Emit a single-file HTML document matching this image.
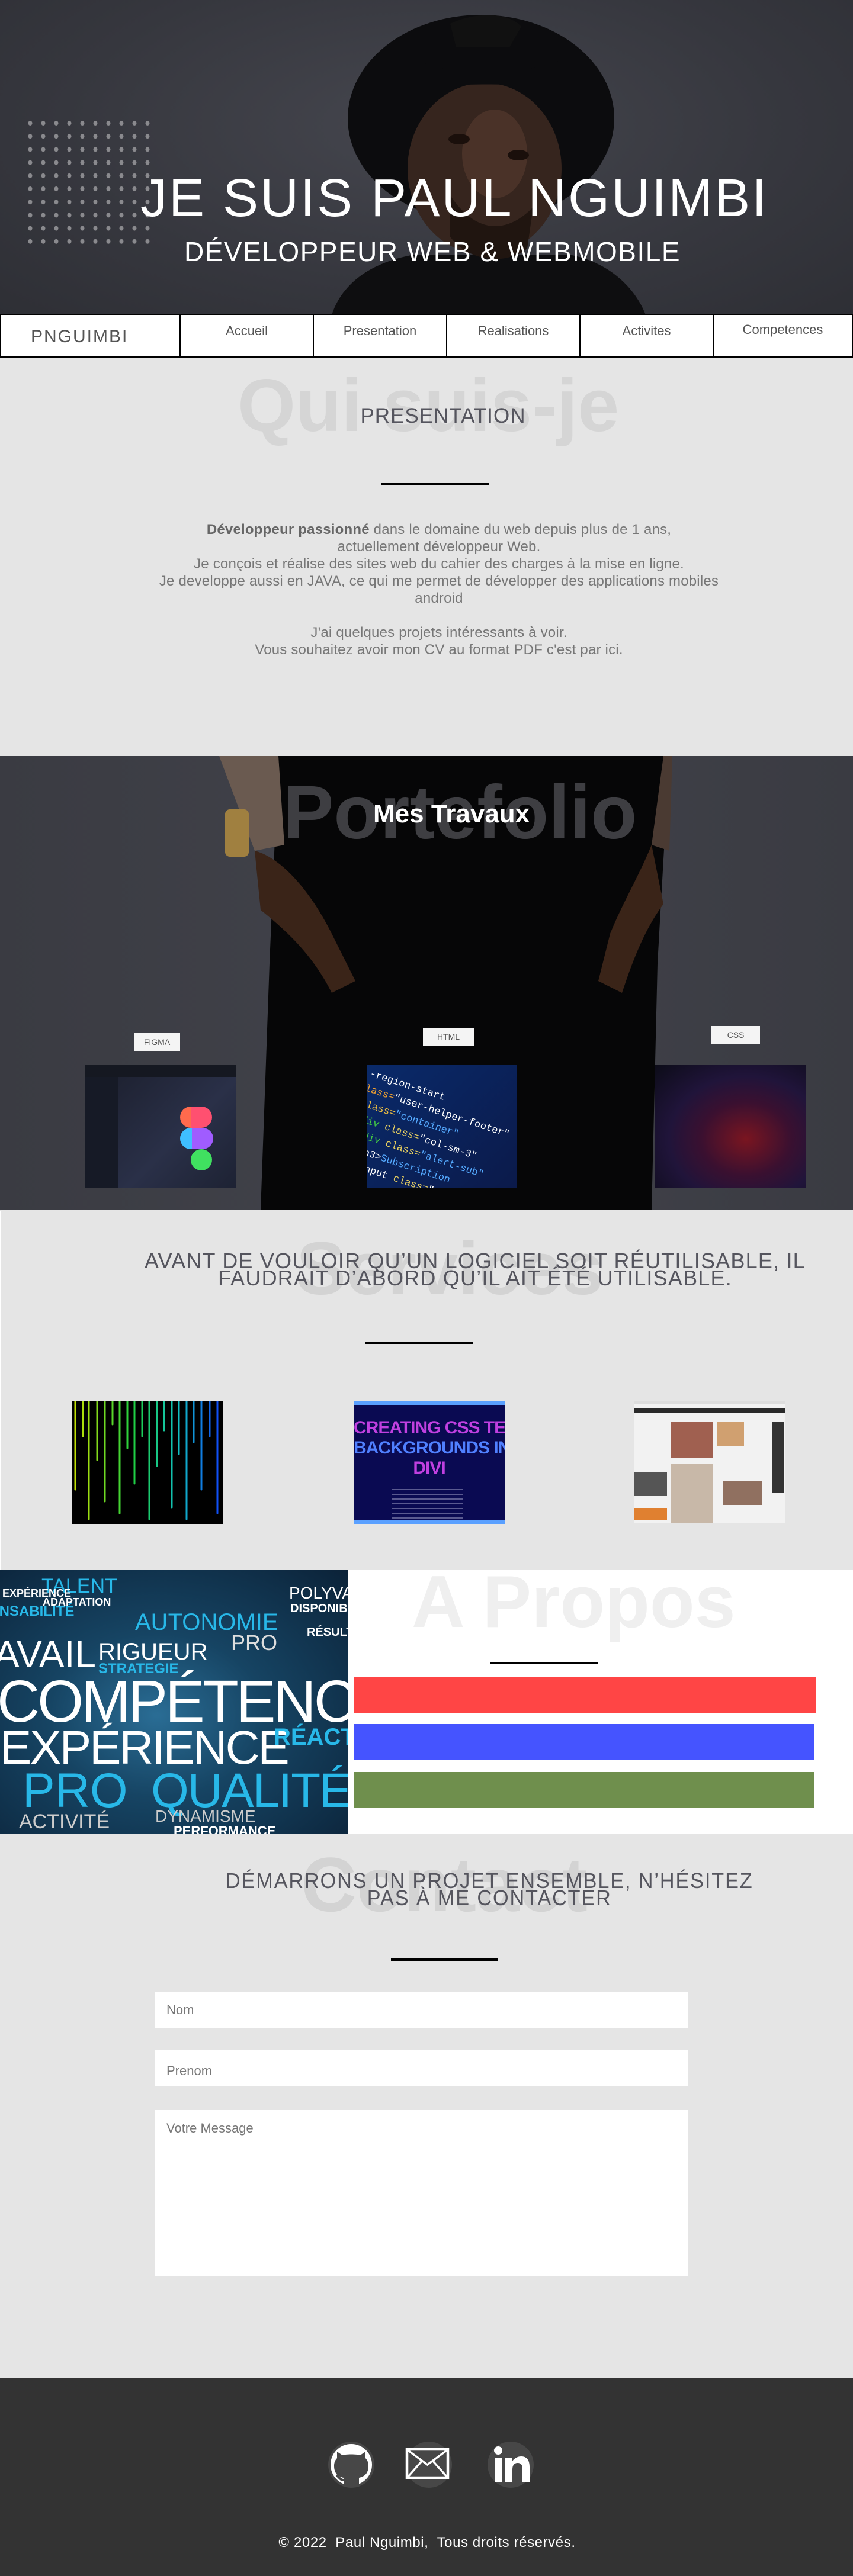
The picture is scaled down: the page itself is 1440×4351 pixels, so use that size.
<!DOCTYPE html>
<html><head><meta charset="utf-8">
<style>
*{margin:0;padding:0;box-sizing:border-box}
body{width:1440px;height:4351px;position:relative;overflow:hidden;background:#e5e5e5;font-family:"Liberation Sans",sans-serif}
.a{position:absolute}
.c{text-align:center;white-space:nowrap}
.wm{position:absolute;font-weight:bold;white-space:nowrap;line-height:1}
.line{position:absolute;height:4px;background:#000}
</style></head><body>

<!-- HERO -->
<div class="a" style="left:0;top:0;width:1440px;height:532px;background:radial-gradient(ellipse at 50% 40%,#45464e 0%,#36373e 60%,#2e2f35 100%);overflow:hidden">
  <svg class="a" style="left:0;top:0" width="1440" height="532">
    <path d="M560 532 C580 470 640 440 700 430 L960 430 C1020 440 1070 480 1090 532 Z" fill="#0e0e10"/>
    <ellipse cx="812" cy="200" rx="225" ry="175" fill="#0c0c0e"/>
    <path d="M760 40 C800 20 860 20 880 45 L860 80 L770 80 Z" fill="#111"/>
    <ellipse cx="818" cy="285" rx="130" ry="145" fill="#36251e"/>
    <ellipse cx="835" cy="260" rx="55" ry="75" fill="#4a3228"/>
    <ellipse cx="775" cy="235" rx="18" ry="9" fill="#1a0f0b"/>
    <ellipse cx="875" cy="262" rx="18" ry="9" fill="#1a0f0b"/>
    <path d="M760 330 C800 390 850 400 900 350 L890 420 C850 450 790 440 760 400 Z" fill="#201510"/>
    <path d="M700 100 C760 130 880 130 950 100 L950 150 C880 140 760 140 700 150 Z" fill="#0c0c0e"/>
  </svg>
  <svg class="a" style="left:46px;top:203px" width="215" height="215">
    <defs><pattern id="dp" width="22" height="22.2" patternUnits="userSpaceOnUse"><ellipse cx="5" cy="5" rx="3.5" ry="4" fill="#8a8a8e"/></pattern></defs>
    <rect width="215" height="215" fill="url(#dp)"/>
  </svg>
  <div class="a c" style="left:237px;top:284px;font-size:90px;color:#fff;letter-spacing:3px">JE SUIS PAUL NGUIMBI</div>
  <div class="a c" style="left:311px;top:398px;font-size:46px;color:#fff;letter-spacing:1.5px">DÉVELOPPEUR WEB &amp; WEBMOBILE</div>
</div>

<!-- NAV -->
<div class="a" style="left:0;top:530px;width:1440px;height:74px;background:#fff;border:2px solid #000">
  <div class="a" style="left:0;top:0;width:303px;height:70px;border-right:2px solid #000;font-size:30px;color:#555;letter-spacing:2px;padding:20px 0 0 50px">PNGUIMBI</div>
  <div class="a c" style="left:303px;top:0;width:225px;height:70px;border-right:2px solid #000;font-size:22px;color:#555;padding-top:14px">Accueil</div>
  <div class="a c" style="left:528px;top:0;width:225px;height:70px;border-right:2px solid #000;font-size:22px;color:#555;padding-top:14px">Presentation</div>
  <div class="a c" style="left:753px;top:0;width:225px;height:70px;border-right:2px solid #000;font-size:22px;color:#555;padding-top:14px">Realisations</div>
  <div class="a c" style="left:978px;top:0;width:225px;height:70px;border-right:2px solid #000;font-size:22px;color:#555;padding-top:14px">Activites</div>
  <div class="a c" style="left:1203px;top:0;width:233px;height:70px;font-size:22px;color:#555;padding-top:12px">Competences</div>
</div>

<!-- PRESENTATION -->
<div class="wm" style="left:401px;top:622px;font-size:126px;color:#d5d5d5">Qui suis-je</div>
<div class="a c" style="left:0;width:1496px;top:683px;font-size:35px;color:#55555e;letter-spacing:1px">PRESENTATION</div>
<div class="line" style="left:644px;top:815px;width:181px"></div>
<div class="a c" style="left:0;width:1482px;top:880px;font-size:24px;line-height:29px;color:#777;letter-spacing:0.2px">
<b style="color:#666">Développeur passionné</b> dans le domaine du web depuis plus de 1 ans,<br>actuellement développeur Web.<br>Je conçois et réalise des sites web du cahier des charges à la mise en ligne.<br>Je developpe aussi en JAVA, ce qui me permet de développer des applications mobiles<br>android<br><br>J'ai quelques projets intéressants à voir.<br>Vous souhaitez avoir mon CV au format PDF c'est par ici.
</div>

<!-- PORTFOLIO -->
<div class="a" style="left:0;top:1277px;width:1440px;height:767px;background:linear-gradient(90deg,#3a3b42,#42434b 50%,#3a3b42);overflow:hidden">
  <svg class="a" style="left:0;top:0" width="1440" height="767">
    <path d="M470 0 L1130 0 L1110 350 L1100 767 L440 767 L455 350 Z" fill="#060607"/>
    <path d="M370 0 L470 0 L480 150 L430 160 Z" fill="#6a5a50"/>
    <path d="M1120 0 L1135 0 L1130 160 L1100 150 Z" fill="#4a3a32"/>
    <rect x="380" y="90" width="40" height="80" rx="8" fill="#a08040"/>
    <path d="M430 160 C470 170 520 220 560 300 L600 380 L560 400 C530 340 490 300 440 260 Z" fill="#3a2418"/>
    <path d="M1100 150 C1080 200 1050 250 1030 300 L1010 380 L1050 400 C1070 340 1090 290 1120 250 Z" fill="#3a2418"/>
  </svg>
  <div class="wm" style="left:478px;top:32px;font-size:128px;color:rgba(110,110,115,.55)">Portefolio</div>
  <div class="a c" style="left:630px;top:73px;font-size:44px;font-weight:bold;color:#fff">Mes Travaux</div>
  <div class="a c" style="left:226px;top:468px;width:78px;height:31px;background:#f4f4f4;font-size:14px;color:#555;line-height:31px">FIGMA</div>
  <div class="a c" style="left:714px;top:459px;width:86px;height:31px;background:#f4f4f4;font-size:14px;color:#555;line-height:31px">HTML</div>
  <div class="a c" style="left:1201px;top:456px;width:82px;height:31px;background:#f4f4f4;font-size:14px;color:#555;line-height:31px">CSS</div>
  <div class="a" style="left:144px;top:522px;width:254px;height:208px;background:linear-gradient(135deg,#1a1d2a,#2a3048 60%,#1d2233);overflow:hidden">
    <div class="a" style="left:0;top:0;width:254px;height:20px;background:#151821"></div>
    <div class="a" style="left:0;top:20px;width:55px;height:188px;background:#161a26"></div>
    <div class="a" style="left:160px;top:70px;width:36px;height:36px;border-radius:18px 0 0 18px;background:#ff6a4d"></div>
    <div class="a" style="left:178px;top:70px;width:36px;height:36px;border-radius:0 18px 18px 0;background:#ff5070"></div>
    <div class="a" style="left:160px;top:106px;width:36px;height:36px;border-radius:18px;background:#3fbfff"></div>
    <div class="a" style="left:180px;top:106px;width:36px;height:36px;border-radius:0 18px 18px 0;background:#a05cff"></div>
    <div class="a" style="left:178px;top:142px;width:36px;height:36px;border-radius:18px;background:#40e060"></div>
  </div>
  <div class="a" style="left:619px;top:522px;width:254px;height:208px;background:linear-gradient(135deg,#0a2a6a,#0b1a4a);overflow:hidden;font-family:'Liberation Mono',monospace;font-size:17px;line-height:26px;color:#e8d060">
    <div style="transform:rotate(18deg);transform-origin:0 0;padding-left:10px;white-space:nowrap">
    <span style="color:#fff">-region-start</span><br><span style="color:#f0a030">lass=</span><span style="color:#fff">"user-helper-footer"</span><br><span style="color:#f0c040">class=</span><span style="color:#5af">"container"</span><br><span style="color:#4c4">&lt;div</span> class=<span style="color:#fff">"col-sm-3"</span><br>&nbsp;<span style="color:#4c4">&lt;div</span> class=<span style="color:#5af">"alert-sub"</span><br>&nbsp;&nbsp;<span style="color:#fff">&lt;h3&gt;</span><span style="color:#5af">Subscription</span><br>&nbsp;&nbsp;<span style="color:#fff">&lt;input</span> class=<span style="color:#fff">"alert"</span></div>
  </div>
  <div class="a" style="left:1106px;top:522px;width:255px;height:208px;background:radial-gradient(ellipse at 60% 60%,#7a1520 0%,#3a1030 35%,#20143a 60%,#0c0c18 100%)"></div>
</div>

<!-- SERVICES -->
<div class="a" style="left:0;top:2045px;width:1440px;height:607px;background:#e5e5e5;border-left:2px solid #fff"></div>
<div class="wm" style="left:500px;top:2080px;font-size:126px;color:#d3d3d3">Services</div>
<div class="a c" style="left:244px;top:2115px;font-size:36px;line-height:29px;color:#55555e;letter-spacing:1.2px">AVANT DE VOULOIR QU’UN LOGICIEL SOIT RÉUTILISABLE, IL<br>FAUDRAIT D’ABORD QU’IL AIT ÉTÉ UTILISABLE.</div>
<div class="line" style="left:617px;top:2266px;width:181px"></div>
<div class="a" style="left:122px;top:2366px;width:255px;height:208px;background:#000;overflow:hidden">
  <svg width="255" height="208">
    <defs><linearGradient id="ng" gradientUnits="userSpaceOnUse" x1="0" y1="0" x2="255" y2="0"><stop offset="0" stop-color="#c8e000"/><stop offset=".4" stop-color="#20d040"/><stop offset=".7" stop-color="#10c0c0"/><stop offset="1" stop-color="#1040ff"/></linearGradient></defs>
    <g stroke="url(#ng)" stroke-width="3" stroke-linecap="round">
      <line x1="5" y1="0" x2="5" y2="150"/><line x1="18" y1="0" x2="18" y2="60"/><line x1="28" y1="0" x2="28" y2="200"/><line x1="42" y1="0" x2="42" y2="100"/><line x1="55" y1="0" x2="55" y2="170"/><line x1="68" y1="0" x2="68" y2="40"/><line x1="80" y1="0" x2="80" y2="190"/><line x1="93" y1="0" x2="93" y2="80"/><line x1="105" y1="0" x2="105" y2="140"/><line x1="118" y1="0" x2="118" y2="60"/><line x1="130" y1="0" x2="130" y2="200"/><line x1="143" y1="0" x2="143" y2="110"/><line x1="155" y1="0" x2="155" y2="50"/><line x1="168" y1="0" x2="168" y2="180"/><line x1="180" y1="0" x2="180" y2="90"/><line x1="193" y1="0" x2="193" y2="200"/><line x1="205" y1="0" x2="205" y2="70"/><line x1="218" y1="0" x2="218" y2="150"/><line x1="232" y1="0" x2="232" y2="60"/><line x1="245" y1="0" x2="245" y2="190"/>
    </g>
  </svg>
</div>
<div class="a" style="left:597px;top:2366px;width:255px;height:208px;background:#0a0a52;border-top:7px solid #5aa0ff;border-bottom:7px solid #5aa0ff;overflow:hidden">
  <div class="c" style="margin-top:22px;font-size:30px;font-weight:bold;line-height:34px;color:#c040e0;letter-spacing:-1px">CREATING CSS TEXT<br><span style="color:#5080ff">BACKGROUNDS IN</span><br>DIVI</div>
  <div style="margin:18px 0 0 65px;width:120px;height:50px;background:repeating-linear-gradient(#5a5a90 0 2px,transparent 2px 8px)"></div>
</div>
<div class="a" style="left:1071px;top:2366px;width:255px;height:206px;background:#f2f2f2;border-top:6px solid #ddd;overflow:hidden">
  <div style="height:9px;background:#2a2a2a;margin-top:6px"></div>
  <div class="a" style="left:62px;top:30px;width:70px;height:60px;background:#a06050"></div>
  <div class="a" style="left:140px;top:30px;width:45px;height:40px;background:#d0a070"></div>
  <div class="a" style="left:232px;top:30px;width:20px;height:120px;background:#333"></div>
  <div class="a" style="left:0;top:115px;width:55px;height:40px;background:#555"></div>
  <div class="a" style="left:62px;top:100px;width:70px;height:120px;background:#c8b8a8"></div>
  <div class="a" style="left:150px;top:130px;width:65px;height:40px;background:#907060"></div>
  <div class="a" style="left:0;top:175px;width:55px;height:20px;background:#e08030"></div>
</div>

<!-- A PROPOS -->
<div class="a" style="left:0;top:2652px;width:1440px;height:446px;background:#fff"></div>
<div class="a" style="left:0;top:2652px;width:587px;height:446px;background:radial-gradient(ellipse at 45% 55%,#2a6d95 0%,#164463 40%,#0b2238 100%);overflow:hidden;font-family:'Liberation Sans',sans-serif;line-height:1;white-space:nowrap">
  <div class="a" style="left:70px;top:10px;font-size:34px;color:#28b8e8">TALENT</div>
  <div class="a" style="left:4px;top:30px;font-size:18px;color:#fff;font-weight:bold">EXPÉRIENCE</div>
  <div class="a" style="left:72px;top:45px;font-size:18px;color:#fff;font-weight:bold">ADAPTATION</div>
  <div class="a" style="left:-20px;top:58px;font-size:24px;color:#28b8e8;font-weight:bold">ONSABILITÉ</div>
  <div class="a" style="left:228px;top:68px;font-size:40px;color:#28b8e8">AUTONOMIE</div>
  <div class="a" style="left:488px;top:25px;font-size:28px;color:#fff">POLYVA</div>
  <div class="a" style="left:490px;top:55px;font-size:20px;color:#fff;font-weight:bold">DISPONIB</div>
  <div class="a" style="left:518px;top:95px;font-size:20px;color:#fff;font-weight:bold">RÉSULT</div>
  <div class="a" style="left:-10px;top:110px;font-size:64px;color:#fff">AVAIL</div>
  <div class="a" style="left:166px;top:118px;font-size:40px;color:#fff">RIGUEUR</div>
  <div class="a" style="left:390px;top:105px;font-size:36px;color:#ddd">PRO</div>
  <div class="a" style="left:166px;top:155px;font-size:24px;color:#28b8e8;font-weight:bold">STRATEGIE</div>
  <div class="a" style="left:-5px;top:172px;font-size:100px;color:#fff;letter-spacing:-4px">COMPÉTENC</div>
  <div class="a" style="left:0;top:260px;font-size:80px;color:#fff;letter-spacing:-3px">EXPÉRIENCE</div>
  <div class="a" style="left:462px;top:262px;font-size:40px;color:#28b8e8;font-weight:bold">RÉACTI</div>
  <div class="a" style="left:38px;top:332px;font-size:82px;color:#28b8e8">PRO</div>
  <div class="a" style="left:255px;top:332px;font-size:82px;color:#28b8e8;letter-spacing:-2px">QUALITÉ</div>
  <div class="a" style="left:32px;top:408px;font-size:34px;color:#ccc">ACTIVITÉ</div>
  <div class="a" style="left:262px;top:402px;font-size:28px;color:#ccc">DYNAMISME</div>
  <div class="a" style="left:293px;top:430px;font-size:22px;color:#fff;font-weight:bold">PERFORMANCE</div>
</div>
<div class="wm" style="left:695px;top:2644px;font-size:124px;color:#efefef">A Propos</div>
<div class="line" style="left:828px;top:2807px;width:181px"></div>
<div class="a" style="left:597px;top:2832px;width:780px;height:61px;background:#ff4545"></div>
<div class="a" style="left:597px;top:2912px;width:778px;height:61px;background:#4554ff"></div>
<div class="a" style="left:597px;top:2993px;width:778px;height:61px;background:#6f8f4d"></div>

<!-- CONTACT -->
<div class="wm" style="left:508px;top:3118px;font-size:130px;color:#d3d3d3">Contact</div>
<div class="a c" style="left:381px;top:3162px;font-size:36px;line-height:29px;color:#55555e;letter-spacing:2px;transform:scaleX(0.95);transform-origin:0 0">DÉMARRONS UN PROJET ENSEMBLE, N’HÉSITEZ<br>PAS À ME CONTACTER</div>
<div class="line" style="left:660px;top:3308px;width:181px"></div>
<div class="a" style="left:262px;top:3364px;width:899px;height:61px;background:#fff;font-size:22px;color:#777;padding:18px 0 0 19px">Nom</div>
<div class="a" style="left:262px;top:3463px;width:899px;height:61px;background:#fff;font-size:22px;color:#777;padding:22px 0 0 19px">Prenom</div>
<div class="a" style="left:262px;top:3564px;width:899px;height:281px;background:#fff;font-size:22px;color:#777;padding:18px 0 0 19px">Votre Message</div>

<!-- FOOTER -->
<div class="a" style="left:0;top:4017px;width:1440px;height:334px;background:#333">
  <svg class="a" style="left:540px;top:100px" width="370" height="100">
    <circle cx="53" cy="46" r="39" fill="#474747"/>
    <circle cx="53" cy="46" r="35" fill="#fff"/>
    <path d="M40 83 L40 68 C30 66 24 60 24 48 C24 42 26 38 29 35 L29 24 L38 30 C44 28 62 28 68 30 L77 24 L77 35 C80 38 82 42 82 48 C82 60 76 66 66 68 L66 83 Z" fill="#474747"/>
    <path d="M40 72 C34 72 32 66 28 64" stroke="#474747" stroke-width="4" fill="none"/>
    <circle cx="184" cy="46" r="39" fill="#474747"/>
    <rect x="147" y="20" width="69" height="48" fill="none" stroke="#fff" stroke-width="4.5"/>
    <path d="M149 22 L181.5 46 L214 22 M149 66 L172 40 M214 66 L191 40" stroke="#fff" stroke-width="3.5" fill="none"/>
    <circle cx="322" cy="46" r="39" fill="#474747"/>
    <circle cx="301" cy="22" r="7" fill="#fff"/>
    <rect x="295" y="34" width="12" height="42" fill="#fff"/>
    <path d="M313 76 L313 34 L325 34 L325 40 C329 34 335 32 340 32 C349 32 354 38 354 50 L354 76 L342 76 L342 53 C342 46 339 43 334 43 C328 43 325 47 325 54 L325 76 Z" fill="#fff"/>
  </svg>
  <div class="a c" style="left:0;width:1442px;top:264px;font-size:24px;color:#fff;letter-spacing:0.6px">© 2022&nbsp; Paul Nguimbi,&nbsp; Tous droits réservés.</div>
</div>
</body></html>
